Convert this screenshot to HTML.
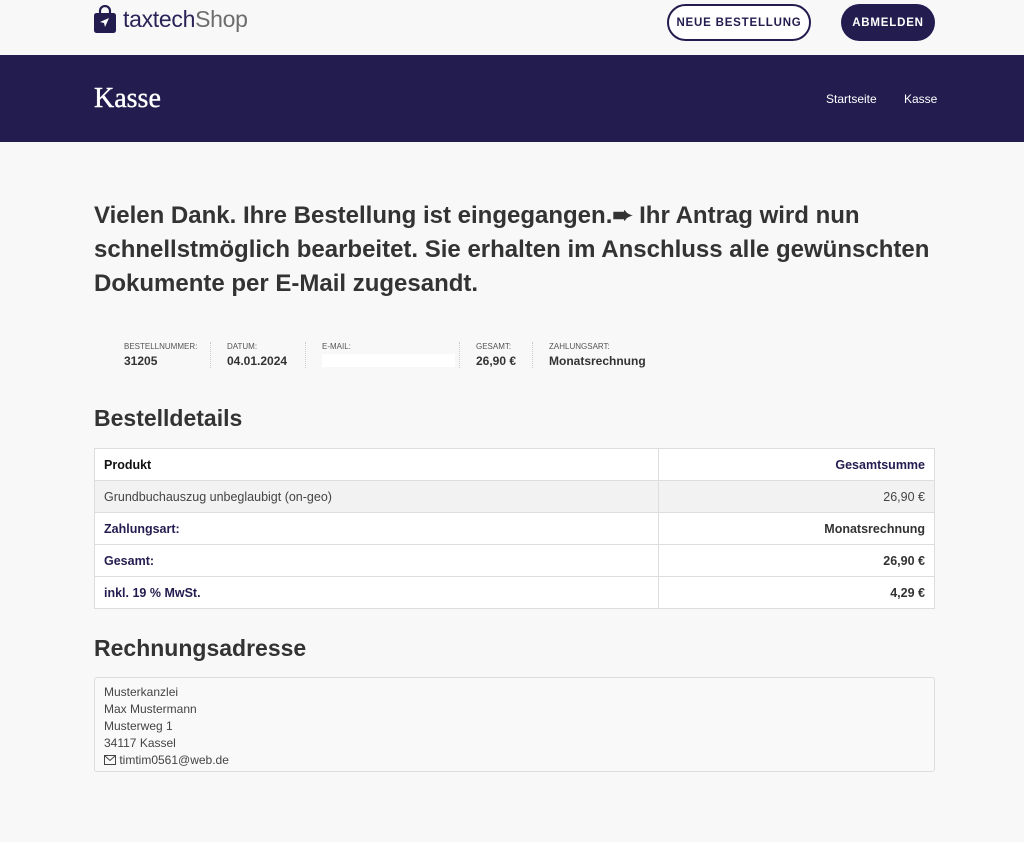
<!DOCTYPE html>
<html><head><meta charset="utf-8"><style>
*{box-sizing:border-box;margin:0;padding:0}
body{width:1024px;height:842px;background:#f8f8f8;font-family:"Liberation Sans",sans-serif;color:#333;position:relative;overflow:hidden}
.hdr{position:absolute;top:0;left:0;width:1024px;height:55px;background:#f8f8f8}
.logo{position:absolute;left:94px;top:5px;display:flex;align-items:center}
.logo span{font-size:23px;color:#2a2358;margin-left:7px;letter-spacing:-.3px}
.logo span b{font-weight:normal;color:#6d6d6d}
.btn{position:absolute;top:4px;height:37px;border-radius:19px;font-size:11.5px;font-weight:bold;letter-spacing:.8px;display:flex;align-items:center;justify-content:center}
.b1{left:667px;width:144px;border:2px solid #231c4f;color:#231c4f;background:#fff}
.b2{left:841px;width:94px;background:#231c4f;color:#fff}
.band{position:absolute;top:55px;left:0;width:1024px;height:87px;background:#231c4f}
.band h1{position:absolute;left:94px;top:28px;font-family:"Liberation Serif",serif;font-weight:normal;color:#fff;font-size:28px;-webkit-text-stroke:.4px #fff}
.crumb{position:absolute;top:37px;color:#fff;font-size:12px}
.msg{position:absolute;left:94px;top:199px;width:860px;font-size:24px;font-weight:bold;line-height:34px;color:#333}
.meta{position:absolute;top:342px;font-size:8px;color:#555;text-transform:uppercase}
.meta b{display:block;font-size:12px;color:#333;margin-top:3px;text-transform:none}
.sep{position:absolute;top:342px;height:26px;border-left:1px dotted #ccc}
h2{position:absolute;left:94px;font-size:23px;font-weight:bold;color:#333}
table{position:absolute;left:94px;top:448px;width:841px;border-collapse:collapse;font-size:12.5px}
td{border:1px solid #ddd;height:32px;padding:0 9px;background:#fff}
td:last-child{text-align:right;width:276px}
tr.g td{background:#f2f2f2;color:#444}
.n{color:#231c4f;font-weight:bold}
.addr{position:absolute;left:94px;top:677px;width:841px;height:95px;border:1px solid #ddd;border-radius:3px;background:#f9f9f9;padding:6px 9px;font-size:12px;line-height:17px;color:#444}
</style></head><body>
<div class="hdr">
<div class="logo"><svg width="22" height="28" viewBox="0 0 22 28"><path d="M6 9V6a5 5 0 0 1 10 0v3" fill="none" stroke="#231c4f" stroke-width="2.2"/><rect x="0" y="8" width="22" height="20" rx="2.5" fill="#231c4f"/><path d="M15 13l-9 4 4 1 1 4z" fill="#fff"/></svg><span>taxtech<b>Shop</b></span></div>
<div class="btn b1">NEUE BESTELLUNG</div>
<div class="btn b2">ABMELDEN</div>
</div>
<div class="band"><h1>Kasse</h1><div class="crumb" style="left:826px">Startseite</div><div class="crumb" style="left:904px">Kasse</div></div>
<div class="msg">Vielen Dank. Ihre Bestellung ist eingegangen.➨ Ihr Antrag wird nun schnellstmöglich bearbeitet. Sie erhalten im Anschluss alle gewünschten Dokumente per E-Mail zugesandt.</div>
<div class="meta" style="left:124px">Bestellnummer:<b>31205</b></div>
<div class="sep" style="left:210px"></div>
<div class="meta" style="left:227px">Datum:<b>04.01.2024</b></div>
<div class="sep" style="left:305px"></div>
<div class="meta" style="left:322px">E-Mail:<b style="background:#fff;width:133px;height:13px"></b></div>
<div class="sep" style="left:459px"></div>
<div class="meta" style="left:476px">Gesamt:<b>26,90 €</b></div>
<div class="sep" style="left:532px"></div>
<div class="meta" style="left:549px">Zahlungsart:<b>Monatsrechnung</b></div>
<h2 style="top:405px">Bestelldetails</h2>
<table>
<tr><td style="font-weight:bold;color:#111">Produkt</td><td class="n">Gesamtsumme</td></tr>
<tr class="g"><td>Grundbuchauszug unbeglaubigt (on-geo)</td><td>26,90 €</td></tr>
<tr><td class="n">Zahlungsart:</td><td style="font-weight:bold">Monatsrechnung</td></tr>
<tr><td class="n">Gesamt:</td><td style="font-weight:bold">26,90 €</td></tr>
<tr><td class="n">inkl. 19 % MwSt.</td><td style="font-weight:bold">4,29 €</td></tr>
</table>
<h2 style="top:635px">Rechnungsadresse</h2>
<div class="addr">Musterkanzlei<br>Max Mustermann<br>Musterweg 1<br>34117 Kassel<br><svg width="12" height="10" viewBox="0 0 12 10" style="vertical-align:-1px"><rect x=".5" y=".5" width="11" height="9" fill="none" stroke="#444"/><path d="M.5 .5l5.5 5 5.5-5" fill="none" stroke="#444"/></svg> timtim0561@web.de</div>
</body></html>
